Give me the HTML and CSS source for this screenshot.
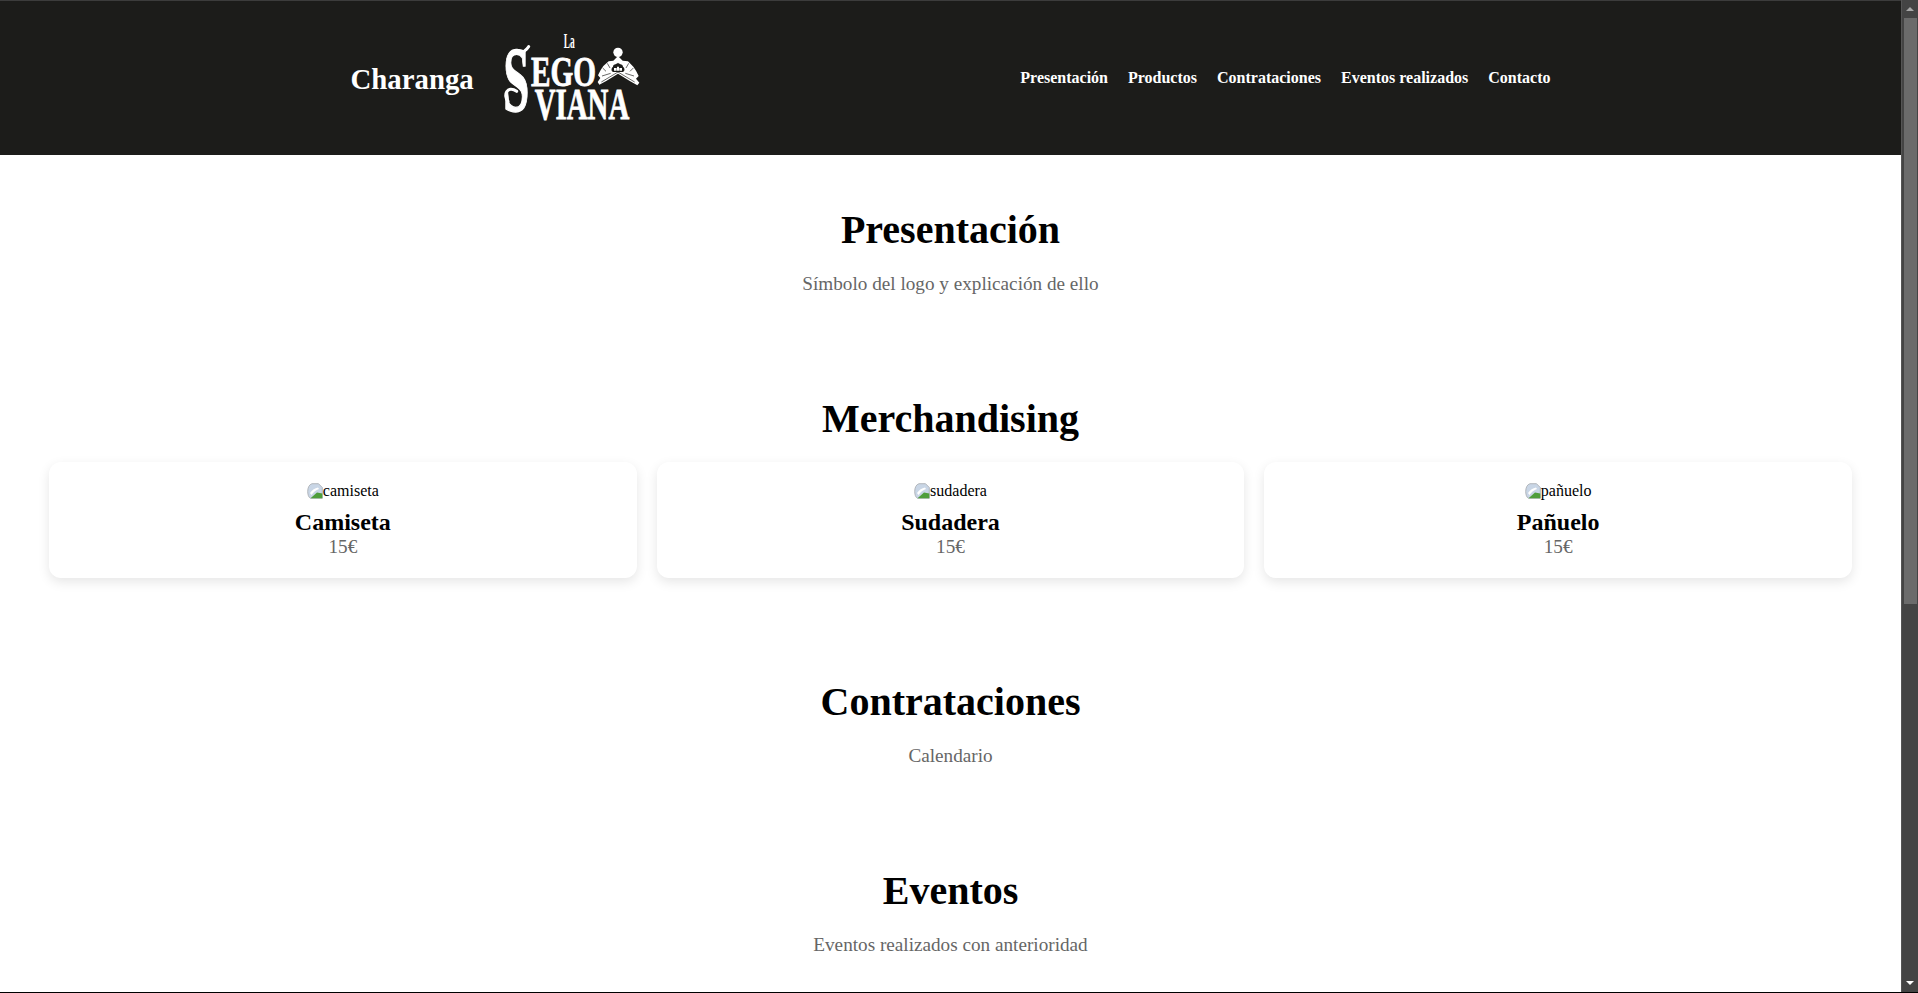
FILE: index.html
```html
<!DOCTYPE html>
<html lang="es">

<head>
    <meta charset="UTF-8">
    <meta name="viewport" content="width=device-width, initial-scale=1.0">
    <title>Charanga La Segoviana</title>
    <link rel="stylesheet" href="styles.css">
</head>

<body>
    <!-- icono de imagen rota -->
    <svg class="defs" aria-hidden="true">
        <symbol id="broken" viewBox="0 0 16 16">
            <path d="M5 .7h6.500l3.800 3.800v10.800H3.500C1.600 14.500.7 11.500.7 8.500.7 4.500 2.200 1.500 5 .7z" fill="#c9d6e6" stroke="#a4a8ad" stroke-width=".8"/>
            <path d="M3 10C5 7 8 5 11 4.500l1 1.500C9 7 6.500 9 4.500 12z" fill="#fff"/>
            <path d="M3.500 15.300L10 9.500l5.300 1v4.800z" fill="#4f9e3c"/>
        </symbol>
    </svg>

    <div class="page">
        <div class="content">
            <!-- cabecera -->
            <header class="header">
                <div class="header-inner">
                    <div class="brand">
                        <h1 class="brand-name">Charanga</h1>
                        <svg class="logo" viewBox="0 0 450 315" role="img" aria-label="La Segoviana">
                            <g class="logo-text">
                                <text class="thin" x="203" y="65" font-size="60" textLength="33" lengthAdjust="spacingAndGlyphs">La</text>
                                <text class="heavy" x="22" y="254" font-size="282" textLength="78" lengthAdjust="spacingAndGlyphs">S</text>
                                <text x="105" y="180" font-size="128" textLength="195" lengthAdjust="spacingAndGlyphs">EGO</text>
                                <text x="116" y="280" font-size="136" textLength="284" lengthAdjust="spacingAndGlyphs">VIANA</text>
                            </g>
                            <!-- remates de la S -->
                            <path class="swash" d="M62 196C34 176 20 208 36 226 M84 76C92 70 96 66 98 62"/>
                            <!-- adorno -->
                            <circle cx="366" cy="79" r="14" fill="#fff"/>
                            <path d="M366 90L380 104 396 106 412 122 420 134 428 150 420 158 430 170 424 178 400 164 366 143 332 164 310 176 305 168 313 156 306 148 314 132 322 120 338 106 352 104Z" fill="#fff"/>
                            <path d="M351 122C351 114 360 116 366 110 372 116 381 114 381 122 388 128 386 136 380 138H352C346 136 344 128 351 122Z" fill="#1c1c1a"/>
                            <path d="M354 126H362V134H354ZM363 122H369V134H363ZM370 126H378V134H370Z" fill="#fff"/>
                            <path class="rib" d="M330 136L320 126M342 126L334 112M390 126L398 112M402 136L412 126M318 150L344 142M414 150L388 142"/>
                            <path class="rib" d="M316 168L366 138 416 168"/>
                        </svg>
                    </div>
                    <nav class="nav">
                        <a href="#presentacion">Presentación</a>
                        <a href="#productos">Productos</a>
                        <a href="#contrataciones">Contrataciones</a>
                        <a href="#eventos">Eventos realizados</a>
                        <a href="#contacto">Contacto</a>
                    </nav>
                </div>
            </header>

            <section class="section" id="presentacion">
                <h2>Presentación</h2>
                <p>Símbolo del logo y explicación de ello</p>
            </section>

            <section class="section" id="productos">
                <h2>Merchandising</h2>
                <div class="cards">
                    <div class="card">
                        <div class="card-img"><svg class="broken"><use href="#broken"/></svg>camiseta</div>
                        <h3>Camiseta</h3>
                        <p>15€</p>
                    </div>
                    <div class="card">
                        <div class="card-img"><svg class="broken"><use href="#broken"/></svg>sudadera</div>
                        <h3>Sudadera</h3>
                        <p>15€</p>
                    </div>
                    <div class="card">
                        <div class="card-img"><svg class="broken"><use href="#broken"/></svg>pañuelo</div>
                        <h3>Pañuelo</h3>
                        <p>15€</p>
                    </div>
                </div>
            </section>

            <section class="section" id="contrataciones">
                <h2>Contrataciones</h2>
                <p>Calendario</p>
            </section>

            <section class="section" id="eventos">
                <h2>Eventos</h2>
                <p>Eventos realizados con anterioridad</p>
            </section>
        </div>

        <!-- barra de scroll -->
        <div class="scrollbar">
            <span class="arrow arrow-up"></span>
            <span class="thumb"></span>
            <span class="arrow arrow-down"></span>
        </div>
    </div>
</body>

</html>
```

FILE: styles.css
```css
* {
    margin: 0;
    padding: 0;
    box-sizing: border-box;
}

html,
body {
    height: 100%;
    overflow: hidden;
}

body {
    font-family: "Liberation Serif", "Times New Roman", serif;
    background-color: #fff;
    color: #000;
}

.defs {
    display: none;
}

.page {
    display: flex;
    height: 993px;
    border-bottom: 1px solid #000;
}

.content {
    flex: 1;
    min-width: 0;
    overflow: hidden;
}

.header {
    height: 155px;
    background-color: #1c1c1a;
    border-top: 1px solid #3c3c3c;
}

.header-inner {
    width: 1200px;
    height: 100%;
    margin: 0 auto;
    display: flex;
    align-items: center;
    justify-content: space-between;
}

.brand {
    display: flex;
    align-items: center;
    gap: 22px;
}

.brand-name {
    padding-top: 2px;
    font-size: 28.8px;
    font-weight: bold;
    color: #fff;
}

.logo {
    width: 150px;
    height: 105px;
    display: block;
}

.logo-text {
    font-family: "Liberation Serif", serif;
    font-weight: bold;
    fill: #fff;
    stroke: #fff;
    stroke-width: 2.5px;
}

.logo-text .thin {
    stroke-width: 0;
}

.logo-text .heavy {
    stroke-width: 4px;
}

.swash {
    fill: none;
    stroke: #fff;
    stroke-width: 9px;
    stroke-linecap: round;
}

.rib {
    fill: none;
    stroke: #1c1c1a;
    stroke-width: 2px;
}

.nav {
    display: flex;
    gap: 20px;
}

.nav a {
    font-size: 16px;
    font-weight: bold;
    color: #fff;
    text-decoration: none;
}

.section {
    padding: 51px 49px 49px;
    text-align: center;
}

.section h2 {
    font-size: 40px;
    margin-bottom: 20px;
}

.section > p {
    font-size: 19.2px;
    color: #666;
}

.cards {
    display: grid;
    grid-template-columns: repeat(3, 1fr);
    gap: 20px;
    margin-top: 2px;
}

.card {
    height: 116px;
    padding: 20px;
    background-color: #fff;
    border-radius: 12px;
    box-shadow: 0 4px 12px rgba(0, 0, 0, 0.1);
}

.card-img {
    height: 18px;
    font-size: 16px;
    line-height: 18px;
    margin-bottom: 9px;
}

.broken {
    width: 16px;
    height: 16px;
    vertical-align: -3px;
}

.card h3 {
    font-size: 24px;
}

.card p {
    font-size: 19.2px;
    color: #666;
}

.scrollbar {
    width: 17px;
    flex-shrink: 0;
    display: flex;
    flex-direction: column;
    align-items: center;
    background-color: #444;
    border-left: 1px solid #555;
}

.thumb {
    width: 13px;
    height: 586px;
    background-color: #6b6b6b;
}

.arrow {
    width: 0;
    height: 0;
    border-left: 4px solid transparent;
    border-right: 4px solid transparent;
}

.arrow-up {
    margin: 7px 0 7px;
    border-bottom: 4px solid #a8a8a8;
}

.arrow-down {
    margin-top: auto;
    margin-bottom: 7px;
    border-top: 4px solid #fff;
}
```
